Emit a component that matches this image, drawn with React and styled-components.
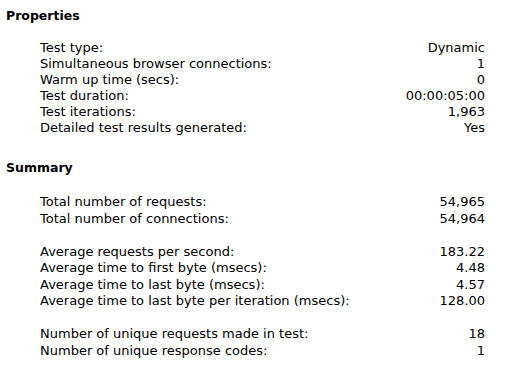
import styled, { createGlobalStyle } from "styled-components";

const GlobalStyle = createGlobalStyle`
	body {
		margin: 0;
		background: #ffffff;
		color: #000000;
		font-family: "DejaVu Sans", Verdana, sans-serif;
		font-size: 13px;
	}
`;

const Page = styled.div`
	width: 509px;
	height: 367px;
	padding: 8px 24px 0 6px;
	box-sizing: border-box;
	overflow: hidden;
`;

const Heading = styled.h2`
	margin: 0;
	font-size: 12.5px;
	font-weight: bold;
	line-height: 16px;
`;

const Section = styled.section`
	margin-bottom: ${(p) => p.$gap || 0}px;
`;

const Rows = styled.div`
	margin: ${(p) => p.$top}px 0 0 34px;
	display: flex;
	flex-direction: column;
	gap: ${(p) => p.$gap || 0}px;
`;

const Group = styled.div`
	display: flex;
	flex-direction: column;
`;

const Row = styled.div`
	display: flex;
	justify-content: space-between;
	line-height: ${(p) => p.$height}px;
`;

const Value = styled.span`
	text-align: right;
`;

const properties = [
	["Test type:", "Dynamic"],
	["Simultaneous browser connections:", "1"],
	["Warm up time (secs):", "0"],
	["Test duration:", "00:00:05:00"],
	["Test iterations:", "1,963"],
	["Detailed test results generated:", "Yes"],
];

const summary = [
	[
		["Total number of requests:", "54,965"],
		["Total number of connections:", "54,964"],
	],
	[
		["Average requests per second:", "183.22"],
		["Average time to first byte (msecs):", "4.48"],
		["Average time to last byte (msecs):", "4.57"],
		["Average time to last byte per iteration (msecs):", "128.00"],
	],
	[
		["Number of unique requests made in test:", "18"],
		["Number of unique response codes:", "1"],
	],
];

const StatRows = ({ rows, height = 16 }) => (
	<Group>
		{rows.map(([label, value]) => (
			<Row key={label} $height={height}>
				<span>{label}</span>
				<Value>{value}</Value>
			</Row>
		))}
	</Group>
);

export default function App() {
	return (
		<Page>
			<GlobalStyle />
			<Section $gap={24}>
				<Heading>Properties</Heading>
				<Rows $top={16}>
					<StatRows rows={properties} />
				</Rows>
			</Section>
			<Section>
				<Heading>Summary</Heading>
				<Rows $top={18} $gap={16.5}>
					{summary.map((rows, i) => (
						<StatRows key={i} rows={rows} height={16.5} />
					))}
				</Rows>
			</Section>
		</Page>
	);
}
